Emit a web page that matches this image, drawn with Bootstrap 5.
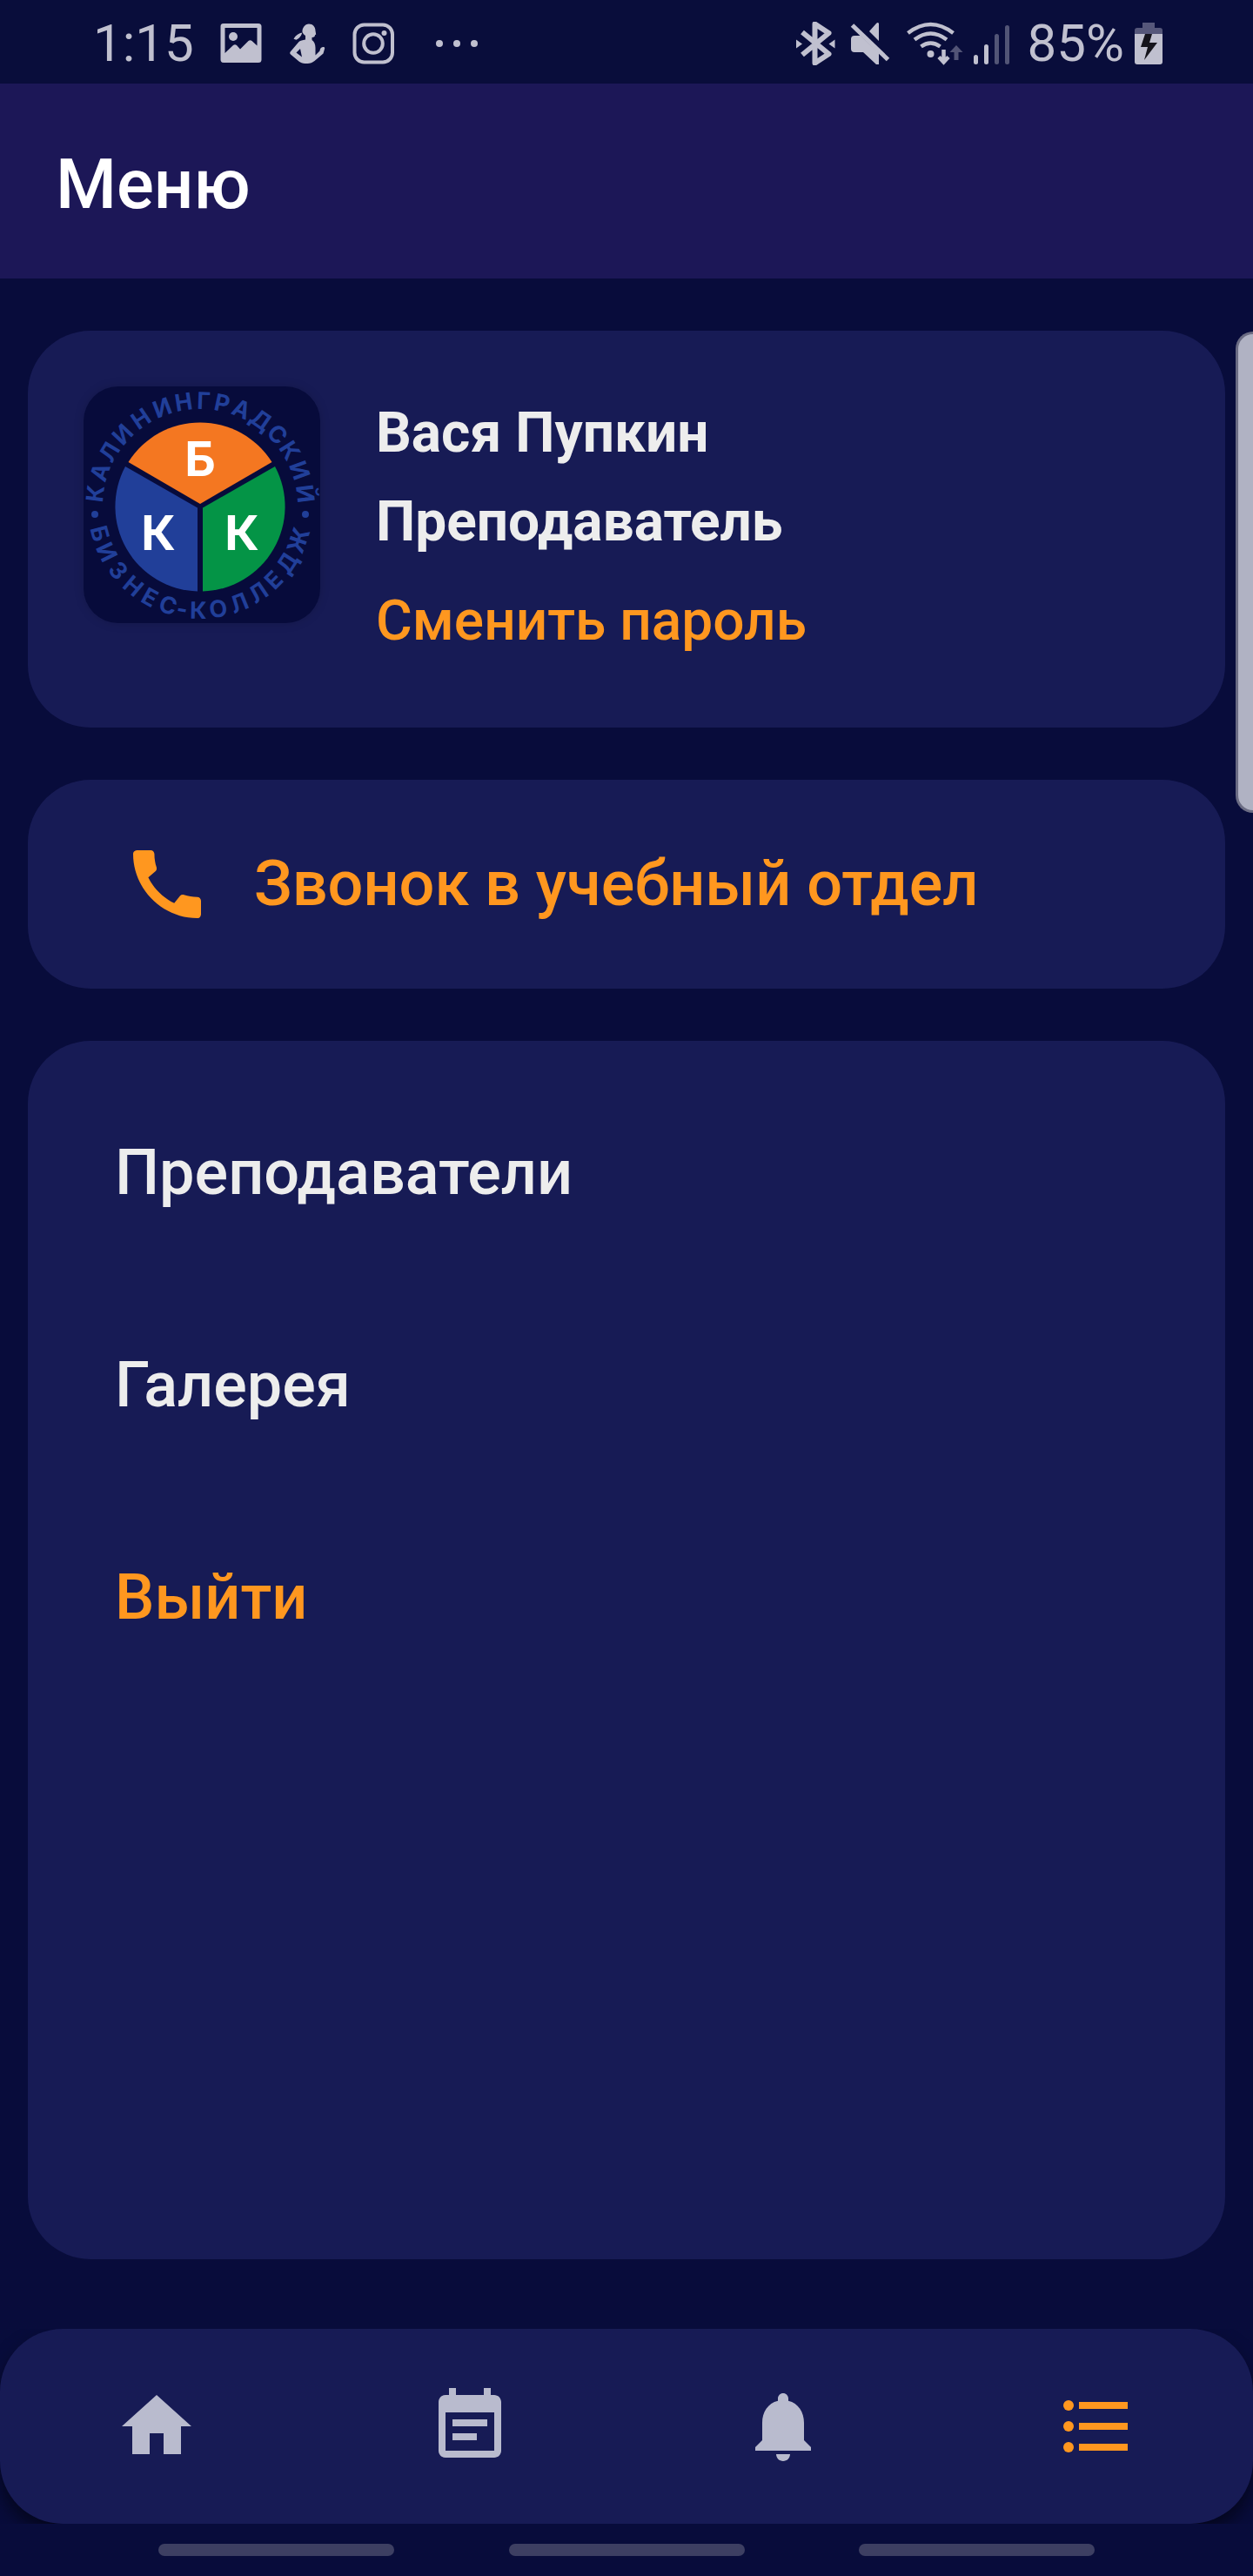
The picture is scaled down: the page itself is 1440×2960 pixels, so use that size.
<!DOCTYPE html>
<html lang="ru">
<head>
<meta charset="utf-8">
<meta name="viewport" content="width=device-width, initial-scale=1">
<title>Меню</title>
<link rel="stylesheet" href="https://cdn.jsdelivr.net/npm/bootstrap@5.3.0/dist/css/bootstrap.min.css">
<style>
  body { background: #080c3b; color: #ededed; font-family: Roboto, "Noto Sans", sans-serif; min-height: 100vh; }
  a, a:hover { color: inherit; text-decoration: none; }
  svg { display: block; flex: none; }
  .accent, a.accent, a.accent:hover { color: #ff971f; }
  .status-bar { height: 96px; padding: 4px 104px 0 107px; font-size: 60px; line-height: 92px; color: #c0c0cf; background: #090d3b; }
  .status-right { gap: 12px; }
  .status-right .indicators { margin-right: 8px; }
  .app-header { height: 224px; padding: 8px 64px 0; background: #1c1757; color: #fff; }
  .app-header h1 { font-size: 80px; line-height: 96px; font-weight: 500; }
  .content { padding: 60px 32px 80px; gap: 60px; }
  .panel { background: #171b55; border-radius: 72px; }
  .profile { padding: 64px 64px 84px; gap: 64px; }
  .logo { width: 272px; height: 272px; border-radius: 40px; background: #070b3b; box-shadow: 0 0 12px rgba(0, 0, 0, .15); }
  .logo-ring { font: 700 27px Inter, sans-serif; fill: #213f99; text-anchor: middle; }
  .logo-initials { font: 700 55px Inter, sans-serif; fill: #fff; text-anchor: middle; }
  .profile-info { font-size: 64px; line-height: 76px; font-weight: 700; padding-top: 16px; gap: 26px; }
  .profile-info a { font-weight: 500; margin-top: 12px; }
  .call-row { height: 240px; padding: 0 108px; gap: 48px; font-size: 72px; line-height: 84px; font-weight: 500; }
  .menu-list { padding: 110px 100px; gap: 160px; font-size: 72px; line-height: 84px; font-weight: 500; }
  .tab-wrap { overflow: hidden; }
  .tab-bar { height: 224px; color: #b9bbce; box-shadow: 0 12px 20px rgba(0, 0, 0, .5); }
  .system-nav { height: 60px; padding: 0 182px; }
  .system-nav span { width: 271px; height: 14px; border-radius: 7px; background: #3d3f62; }
  .edge-handle { position: absolute; right: 0; top: 381px; width: 20px; height: 553px; background: #b0b2c3; border: 3px solid #6b6c83; border-right: 0; border-radius: 20px 0 0 20px; }
</style>
</head>
<body class="d-flex flex-column position-relative">

<div class="status-bar d-flex align-items-center justify-content-between">
  <div class="d-flex align-items-center">
    <span>1:15</span>
    <svg class="ms-4" width="310" height="50" viewBox="247 24 310 50" fill="currentColor" aria-hidden="true">
      <path fill-rule="evenodd" d="M257 26h40q3.500 0 3.500 3.500v38q0 3.500-3.500 3.500h-40q-3.500 0-3.500-3.500v-38q0-3.500 3.500-3.500zM258.500 31v29l9.500-9q2-1.500 4 0l4 4.500 9.500-9.500q2-1.500 4 0l6 5.500v-20.500z"/>
      <circle cx="268" cy="41" r="5"/>
      <path fill-rule="evenodd" d="M355 26.500c4.500 0 7.500 3.500 7.500 8l.7 4-1.200.8c0 2-1 2.700-3.500 2.700v3c2.500 1.500 4 5 4 9v8.500l5-5c.5-3.500 2-4.500 4.500-4.500 1 0 1.500 1 1 2.300l-1.500 5.200-10 8.500c-2.500 2-5 3-8 3h-3c-3 0-5-1-7-2.500l-9.500-8c-1-1-1-2-.3-3l9.800-11.500c2-1.500 4-2 7.500-2.500v-4.500c-2-1-3-3-3.500-4.500-.5 3.500-3.500 8-7 9.200l-3-1c2.500-4.500 6-6.500 10-7.200-.5-5.500 3-10 7.500-10zM345 55l-4.500 4.500 6.500 5z"/>
      <g fill="none" stroke="currentColor" stroke-width="4"><rect x="407.500" y="27.500" width="43.500" height="43" rx="11"/><circle cx="429" cy="49" r="10.800"/></g>
      <circle cx="441.500" cy="37" r="3"/>
      <circle cx="505" cy="49" r="4"/><circle cx="525" cy="49" r="4"/><circle cx="545" cy="49" r="4"/>
    </svg>
  </div>
  <div class="status-right d-flex align-items-center">
    <svg class="indicators" width="246" height="50" viewBox="912 24 246 50" fill="currentColor" aria-hidden="true">
      <path d="M919 36l30.500 25L933.500 71.500V26.500L949.500 37 919 62" fill="none" stroke="currentColor" stroke-width="6" stroke-linejoin="round"/>
      <path d="M912 44.500v10l7-5zM956.500 44.500v10l-7-5z"/>
      <path d="M979 40h7l21 20v13h-3l-15-14h-10q-4 0-4-4v-11q0-4 4-4zM1007 26v20l-11-11 8-9q2-2 3 0z"/>
      <path d="M976.500 28l41 39.500" fill="none" stroke="currentColor" stroke-width="5"/>
      <g fill="none" stroke="currentColor" stroke-width="4.500"><path d="M1040.500 37q26-20 52 0M1048 44.500q18.500-14 37 0M1055.500 52.500q11-8 22 0"/><path d="M1081.500 56v14M1076 64.500l5.500 6 5.500-6"/></g>
      <circle cx="1066.500" cy="61" r="4"/>
      <path opacity=".4" d="M1096 51l7.500 8h-5v9h-5v-9h-5z"/>
      <rect x="1116" y="62" width="5" height="11" rx="2.500"/><rect x="1128" y="50" width="5" height="23" rx="2.500"/>
      <g opacity=".4"><rect x="1140" y="38" width="5" height="35" rx="2.500"/><rect x="1152" y="28" width="5" height="45" rx="2.500"/></g>
    </svg>
    <span>85%</span>
    <svg width="32" height="48" viewBox="0 0 32 48" aria-hidden="true">
      <path fill="#56577a" d="M9 0h14v6h6q3 0 3 3v4H0V9q0-3 3-3h6z"/>
      <path fill="#c0c0cf" d="M0 13h32v32q0 3-3 3H3q-3 0-3-3z"/>
      <path fill="#15141c" d="M12 13h8l-3 10h9L11 43l4-15H7z"/>
    </svg>
  </div>
</div>

<header class="app-header d-flex align-items-center">
  <h1 class="m-0">Меню</h1>
</header>

<main class="content flex-grow-1 d-flex flex-column">
  <section class="panel profile d-flex align-items-start">
    <svg class="logo" viewBox="0 0 272 272" role="img" aria-label="Калининградский бизнес-колледж">
      <path fill="#f47721" d="M134 135L51.500 87A97.500 97.500 0 0 1 216.500 87z"/>
      <path fill="#213f99" d="M131 139.500V235.500A97.500 97.500 0 0 1 48 92z"/>
      <path fill="#049446" d="M137 139.500V235.500A97.500 97.500 0 0 0 220 92z"/>
      <g class="logo-initials"><text x="134" y="103">Б</text><text x="86" y="188">К</text><text x="182" y="188">К</text></g>
      <g class="logo-ring" transform="translate(134 138)">
        <text y="-112" transform="rotate(-83)">К</text><text y="-112" transform="rotate(-71)">А</text><text y="-112" transform="rotate(-59)">Л</text><text y="-112" transform="rotate(-47)">И</text><text y="-112" transform="rotate(-34)">Н</text><text y="-112" transform="rotate(-21)">И</text><text y="-112" transform="rotate(-9)">Н</text><text y="-112" transform="rotate(2)">Г</text><text y="-112" transform="rotate(12)">Р</text><text y="-112" transform="rotate(23)">А</text><text y="-112" transform="rotate(35)">Д</text><text y="-112" transform="rotate(47)">С</text><text y="-112" transform="rotate(58)">К</text><text y="-112" transform="rotate(70)">И</text><text y="-112" transform="rotate(83)">Й</text>
        <text y="129" transform="rotate(75)">Б</text><text y="129" transform="rotate(64)">И</text><text y="129" transform="rotate(52)">З</text><text y="129" transform="rotate(40)">Н</text><text y="129" transform="rotate(29)">Е</text><text y="129" transform="rotate(18)">С</text><text y="129" transform="rotate(10)">-</text><text y="129" transform="rotate(1)">К</text><text y="129" transform="rotate(-10)">О</text><text y="129" transform="rotate(-22)">Л</text><text y="129" transform="rotate(-34)">Л</text><text y="129" transform="rotate(-45)">Е</text><text y="129" transform="rotate(-57)">Д</text><text y="129" transform="rotate(-71)">Ж</text>
        <circle cx="-121" cy="9" r="4"/><circle cx="121" cy="9" r="4"/>
      </g>
    </svg>
    <div class="profile-info d-flex flex-column align-items-start">
      <span>Вася Пупкин</span>
      <span>Преподаватель</span>
      <a href="#" class="accent">Сменить пароль</a>
    </div>
  </section>

  <a href="#" class="panel call-row accent d-flex align-items-center">
    <svg width="104" height="104" viewBox="0 0 24 24" fill="currentColor" aria-hidden="true"><path d="M20.010 15.380c-1.230 0-2.420-.2-3.530-.560-.350-.120-.740-.030-1.010.240l-1.570 1.970c-2.830-1.350-5.480-3.900-6.890-6.830l1.950-1.660c.27-.28.35-.67.24-1.020-.370-1.110-.560-2.300-.560-3.530 0-.540-.450-.990-.990-.990H4.190C3.650 3 3 3.240 3 3.990 3 13.280 10.730 21 20.010 21c.710 0 .990-.63.990-1.180v-3.450c0-.540-.450-.990-.990-.990z"/></svg>
    <span>Звонок в учебный отдел</span>
  </a>

  <nav class="panel menu-list flex-grow-1 d-flex flex-column align-items-start">
    <a href="#">Преподаватели</a>
    <a href="#">Галерея</a>
    <a href="#" class="accent">Выйти</a>
  </nav>
</main>

<div class="tab-wrap">
  <nav class="panel tab-bar row g-0 align-items-center">
    <a href="#" class="col d-flex justify-content-center" aria-label="Главная"><svg width="96" height="96" viewBox="0 0 24 24" fill="currentColor"><path d="M10 20v-6h4v6h5v-8h3L12 3 2 12h3v8z"/></svg></a>
    <a href="#" class="col d-flex justify-content-center" aria-label="Расписание"><svg width="96" height="96" viewBox="0 0 24 24" fill="currentColor"><path d="M17 10H7v2h10v-2zm2-7h-1V1h-2v2H8V1H6v2H5c-1.110 0-1.990.9-1.990 2L3 19c0 1.100.89 2 2 2h14c1.100 0 2-.9 2-2V5c0-1.100-.9-2-2-2zm0 16H5V8h14v11zm-5-5H7v2h7v-2z"/></svg></a>
    <a href="#" class="col d-flex justify-content-center" aria-label="Уведомления"><svg width="96" height="96" viewBox="0 0 24 24" fill="currentColor"><path d="M12 22c1.100 0 2-.9 2-2h-4c0 1.100.89 2 2 2zm6-6v-5c0-3.070-1.640-5.640-4.500-6.320V4c0-.83-.67-1.500-1.500-1.500s-1.500.67-1.500 1.500v.68C7.630 5.360 6 7.920 6 11v5l-2 2v1h16v-1l-2-2z"/></svg></a>
    <a href="#" class="col d-flex justify-content-center accent" aria-label="Меню" aria-current="page"><svg width="96" height="96" viewBox="0 0 24 24" fill="currentColor"><circle cx="4" cy="6" r="1.500"/><circle cx="4" cy="12" r="1.500"/><circle cx="4" cy="18" r="1.500"/><path d="M7 5h14v2H7zM7 11h14v2H7zM7 17h14v2H7z"/></svg></a>
  </nav>
</div>

<div class="system-nav d-flex align-items-center justify-content-between"><span></span><span></span><span></span></div>
<div class="edge-handle"></div>

<script src="https://cdn.jsdelivr.net/npm/bootstrap@5.3.0/dist/js/bootstrap.bundle.min.js"></script>
</body>
</html>
